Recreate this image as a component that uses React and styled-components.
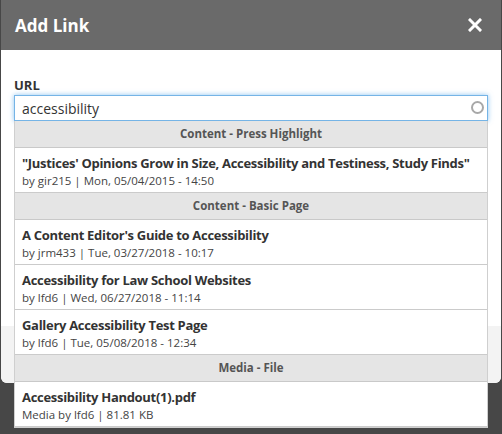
import React from 'react';
import styled, { createGlobalStyle } from 'styled-components';

const GlobalStyle = createGlobalStyle`
  html, body {
    margin: 0;
    padding: 0;
    background: #474747;
  }
  * {
    box-sizing: border-box;
  }
`;

const results = [
  {
    group: 'Content - Press Highlight',
    items: [
      {
        title: '"Justices\' Opinions Grow in Size, Accessibility and Testiness, Study Finds"',
        meta: 'by gir215 | Mon, 05/04/2015 - 14:50',
      },
    ],
  },
  {
    group: 'Content - Basic Page',
    items: [
      { title: "A Content Editor's Guide to Accessibility", meta: 'by jrm433 | Tue, 03/27/2018 - 10:17' },
      { title: 'Accessibility for Law School Websites', meta: 'by lfd6 | Wed, 06/27/2018 - 11:14' },
      { title: 'Gallery Accessibility Test Page', meta: 'by lfd6 | Tue, 05/08/2018 - 12:34' },
    ],
  },
  {
    group: 'Media - File',
    items: [{ title: 'Accessibility Handout(1).pdf', meta: 'Media by lfd6 | 81.81 KB' }],
  },
];

export default function App() {
  return (
    <Page>
      <GlobalStyle />
      <Dialog>
        <Header>
          <Title>Add Link</Title>
          <CloseButton aria-label="Close">
            <svg width="14" height="14" viewBox="0 0 14 14">
              <path d="M2 2 L12 12 M12 2 L2 12" stroke="#fff" strokeWidth="3" strokeLinecap="square" />
            </svg>
          </CloseButton>
        </Header>
        <Body>
          <Label>URL</Label>
          <Field>
            <Input defaultValue="accessibility" />
            <Spinner />
            <Dropdown>
              {results.map((g) => (
                <React.Fragment key={g.group}>
                  <GroupHead>{g.group}</GroupHead>
                  {g.items.map((it) => (
                    <Item key={it.title}>
                      <ItemTitle>{it.title}</ItemTitle>
                      <ItemMeta>{it.meta}</ItemMeta>
                    </Item>
                  ))}
                </React.Fragment>
              ))}
            </Dropdown>
          </Field>
        </Body>
        <Footer />
      </Dialog>
    </Page>
  );
}

const Page = styled.div`
  width: 502px;
  height: 434px;
  overflow: hidden;
  background: #474747;
  padding-left: 1px;
  font-family: 'Open Sans', 'Liberation Sans', sans-serif;
`;

const Dialog = styled.div`
  width: 500px;
  display: flex;
  flex-direction: column;
  background: #fff;
  border-radius: 0 0 6px 6px;
`;

const Header = styled.div`
  height: 50px;
  background: #6a6a6a;
  display: flex;
  align-items: center;
  justify-content: space-between;
  padding: 0 19px 0 14px;
`;

const Title = styled.h1`
  margin: 0;
  color: #fff;
  font-size: 17px;
  font-weight: 700;
`;

const CloseButton = styled.button`
  border: 0;
  padding: 0;
  background: none;
  display: flex;
  cursor: pointer;
`;

const Body = styled.div`
  padding: 26px 13px 0 13px;
  height: 276px;
`;

const Label = styled.label`
  display: block;
  color: #333;
  font-size: 13px;
  font-weight: 700;
  margin-bottom: 1px;
`;

const Field = styled.div`
  position: relative;
`;

const Input = styled.input`
  width: 100%;
  height: 26px;
  border: 1px solid #75b4e6;
  box-shadow: 0 0 5px rgba(90, 170, 235, 0.7);
  outline: none;
  padding: 0 30px 0 7px;
  font-family: inherit;
  font-size: 14px;
  color: #333;
`;

const Spinner = styled.span`
  position: absolute;
  right: 4px;
  top: 6px;
  width: 13px;
  height: 13px;
  border: 2px solid #a8a8a8;
  border-radius: 50%;
`;

const Dropdown = styled.div`
  position: absolute;
  top: 100%;
  left: 0;
  right: 0;
  background: #fff;
  border: 1px solid #cfcfcf;
  border-top: 0;
  z-index: 2;
`;

const GroupHead = styled.div`
  height: 27px;
  line-height: 26px;
  background: #e5e5e5;
  border-bottom: 1px solid #c9c9c9;
  text-align: center;
  color: #555;
  font-size: 11.5px;
  font-weight: 700;
`;

const Item = styled.div`
  height: 45px;
  padding: 6px 7px 0 7px;
  border-bottom: 1px solid #cbcbcb;
`;

const ItemTitle = styled.div`
  color: #333;
  font-size: 13px;
  font-weight: 700;
  letter-spacing: -0.3px;
  line-height: 18px;
  white-space: nowrap;
`;

const ItemMeta = styled.div`
  color: #444;
  font-size: 11.5px;
  line-height: 18px;
`;

const Footer = styled.div`
  height: 57px;
  background: #f3f3f3;
  border-radius: 0 0 6px 6px;
`;
